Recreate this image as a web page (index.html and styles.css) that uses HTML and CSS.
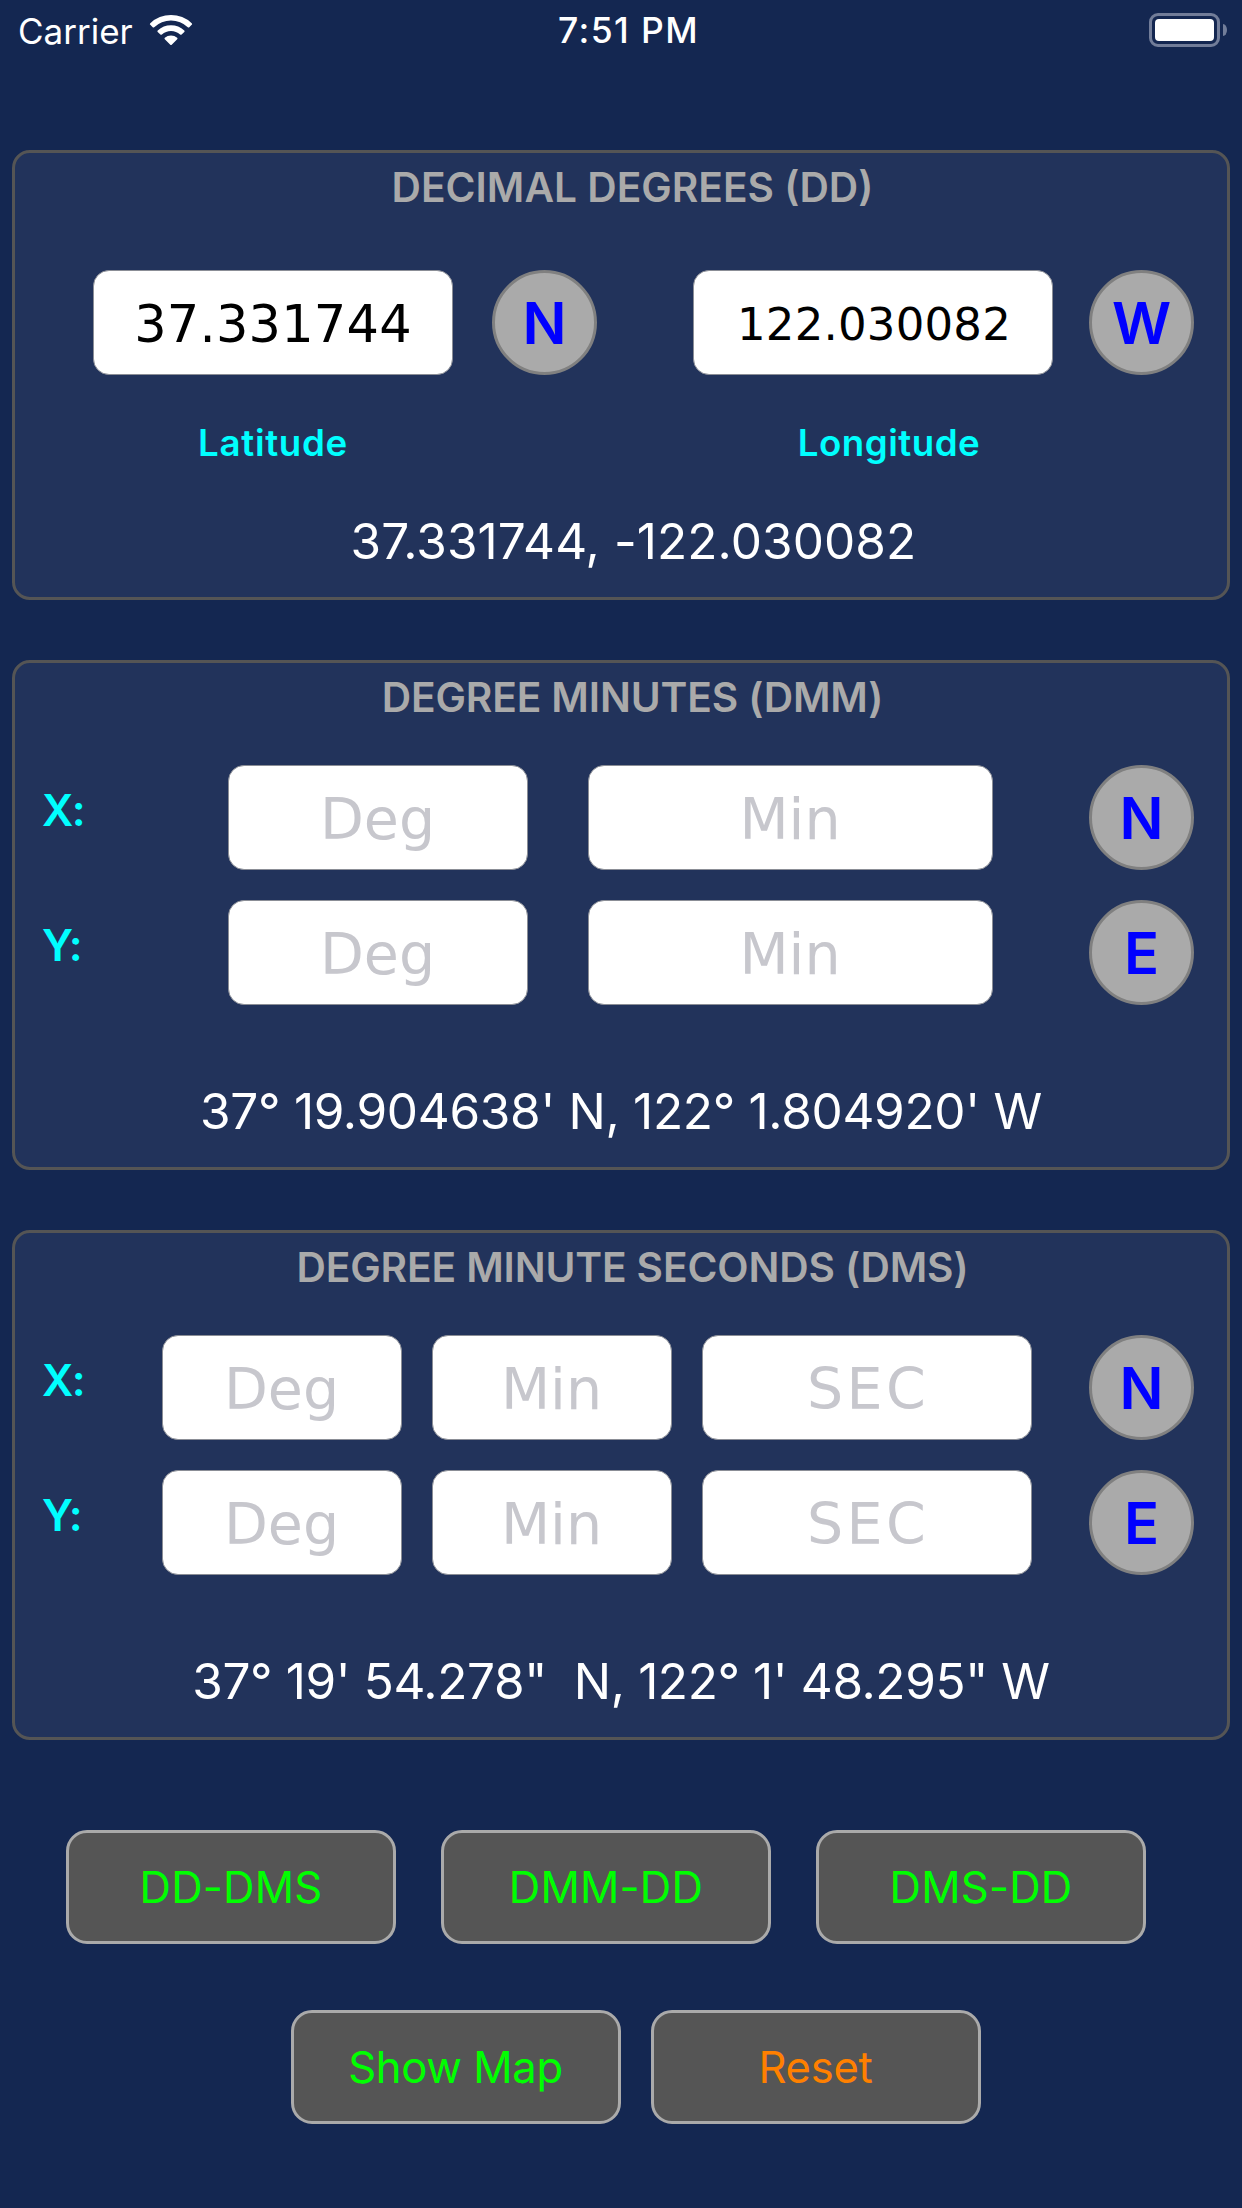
FILE: index.html
```html
<!DOCTYPE html>
<html lang="en">
<head>
<meta charset="utf-8">
<title>Coordinate Converter</title>
<link rel="stylesheet" href="styles.css">
</head>
<body>
<header class="status">
  <div class="status-left">
    <span class="carrier">Carrier</span>
    <svg class="wifi" width="44" height="32" viewBox="0 0 44 32" fill="#fff">
      <path d="M1.3 9.2a30 30 0 0 1 41.4 0q.9.8 0 1.6l-2.4 2.4q-.7.6-1.5 0a24.500 24.500 0 0 0-33.600 0q-.8.6-1.500 0L1.300 10.800q-.9-.8 0-1.600z"/>
      <path d="M8.700 16.500a19.500 19.500 0 0 1 26.600 0q.7.700 0 1.400l-2.700 2.600q-.7.600-1.500 0a13.500 13.500 0 0 0-18.200 0q-.8.600-1.500 0l-2.700-2.600q-.7-.700 0-1.400z"/>
      <path d="M15.800 23.800a9.500 9.500 0 0 1 12.400 0q.7.700 0 1.400l-5.500 5.500q-.7.600-1.400 0l-5.500-5.500q-.7-.700 0-1.400z"/>
    </svg>
  </div>
  <span class="time">7:51 PM</span>
  <div class="status-right">
    <div class="battery"><div class="battery-level"></div></div>
    <div class="battery-cap"></div>
  </div>
</header>

<main class="panels">
  <section class="panel panel-dd">
    <h2 class="title title-dd">DECIMAL DEGREES (DD)</h2>
    <div class="dd-row">
      <div class="field value-lat">37.331744</div>
      <div class="dir dir-lat">N</div>
      <div class="field field-lon value-lon">122.030082</div>
      <div class="dir dir-lon">W</div>
    </div>
    <div class="captions">
      <span class="caption">Latitude</span>
      <span class="caption caption-lon">Longitude</span>
    </div>
    <p class="result result-dd">37.331744, -122.030082</p>
  </section>

  <section class="panel panel-dm">
    <h2 class="title">DEGREE MINUTES (DMM)</h2>
    <div class="rows">
      <div class="row row-dmm">
        <span class="axis">X:</span>
        <div class="field">Deg</div>
        <div class="field">Min</div>
        <div class="dir">N</div>
      </div>
      <div class="row row-dmm">
        <span class="axis">Y:</span>
        <div class="field">Deg</div>
        <div class="field">Min</div>
        <div class="dir">E</div>
      </div>
    </div>
    <p class="result result-dmm">37° 19.904638' N, 122° 1.804920' W</p>
  </section>

  <section class="panel panel-dm">
    <h2 class="title">DEGREE MINUTE SECONDS (DMS)</h2>
    <div class="rows">
      <div class="row row-dms">
        <span class="axis">X:</span>
        <div class="field">Deg</div>
        <div class="field">Min</div>
        <div class="field field-sec">SEC</div>
        <div class="dir">N</div>
      </div>
      <div class="row row-dms">
        <span class="axis">Y:</span>
        <div class="field">Deg</div>
        <div class="field">Min</div>
        <div class="field field-sec">SEC</div>
        <div class="dir">E</div>
      </div>
    </div>
    <p class="result result-dms">37° 19' 54.278"  N, 122° 1' 48.295" W</p>
  </section>
</main>

<nav class="actions">
  <div class="buttons buttons-convert">
    <button class="btn">DD-DMS</button>
    <button class="btn">DMM-DD</button>
    <button class="btn">DMS-DD</button>
  </div>
  <div class="buttons buttons-tools">
    <button class="btn btn-map">Show Map</button>
    <button class="btn btn-reset">Reset</button>
  </div>
</nav>
</body>
</html>
```
FILE: styles.css
```css
* { box-sizing: border-box; margin: 0; padding: 0; }

body {
  width: 1242px;
  height: 2208px;
  background: #142751;
  font-family: Inter, "Liberation Sans", sans-serif;
  color: #fff;
  overflow: hidden;
}

/* Status bar */
.status {
  display: grid;
  grid-template-columns: 1fr auto 1fr;
  align-items: center;
  height: 62px;
  padding: 0 15px 0 18px;
  font-size: 35px;
  line-height: 62px;
}
.status-left { display: flex; align-items: center; gap: 16px; }
.wifi { display: block; margin-bottom: 2px; }
.time { font-size: 35.5px; font-weight: 500; letter-spacing: 1.4px; padding-left: 12px; }
.status-right { display: flex; align-items: center; justify-content: flex-end; gap: 3px; margin-bottom: 2px; }
.battery {
  width: 71px;
  height: 34px;
  padding: 3px;
  border: 3px solid #727d99;
  border-radius: 9px;
}
.battery-level { height: 22px; border-radius: 4px; background: #fff; }
.battery-cap { width: 4px; height: 12px; border-radius: 0 4px 4px 0 / 0 6px 6px 0; background: #727d99; }

/* Panels */
.panels { display: flex; flex-direction: column; gap: 60px; padding: 88px 12px 0; }
.panel {
  background: #22335b;
  border: 3px solid #555;
  border-radius: 18px;
}
.panel-dd { height: 450px; }
.panel-dm { height: 510px; }

.title {
  height: 68px;
  line-height: 70px;
  padding-left: 23px;
  font-size: 40.7px;
  font-weight: 600;
  letter-spacing: -0.13px;
  text-align: center;
  color: #aaa;
}
.title-dd { letter-spacing: 0; }

.field {
  display: flex;
  align-items: center;
  justify-content: center;
  height: 105px;
  padding: 3px 1px 0 0;
  border: 1px solid #8b8e96;
  border-radius: 16px;
  background: #fff;
  color: #c7c7cd;
  font: 57px/1 "DejaVu Sans", sans-serif;
}
.dir {
  display: flex;
  align-items: center;
  justify-content: center;
  width: 105px;
  height: 105px;
  border: 3px solid #808080;
  border-radius: 50%;
  background: #aaa;
  color: #00f;
  font-size: 58px;
  font-weight: 600;
}

.dd-row { display: flex; margin-top: 49px; padding-left: 78px; }
.dd-row .field { width: 360px; padding-right: 0; color: #000; }
.dd-row .value-lat { font-size: 51px; letter-spacing: 0.2px; }
.dd-row .value-lon { padding-left: 2px; font-size: 45px; letter-spacing: 0.2px; }
.dir-lat { margin-left: 39px; }
.field-lon { margin-left: 96px; }
.dir-lon { margin-left: 36px; }

.captions { display: flex; margin-top: 38px; padding-left: 78px; }
.caption {
  width: 360px;
  height: 60px;
  line-height: 59px;
  font-size: 36.7px;
  font-weight: 600;
  letter-spacing: 0.7px;
  text-align: center;
  color: #0ff;
}
.caption-lon { margin-left: 256px; letter-spacing: 0.5px; }

.result {
  line-height: 60px;
  font-size: 49.5px;
  text-align: center;
  white-space: pre;
}
.result-dd { margin-top: 38px; padding-left: 25px; letter-spacing: 0.1px; }
.result-dmm { margin-top: 76px; letter-spacing: -0.31px; }
.result-dms { margin-top: 76px; letter-spacing: -0.4px; }

.rows { display: flex; flex-direction: column; gap: 30px; margin-top: 34px; padding: 0 33px 0 27px; }
.row { display: grid; align-items: center; }
.row .dir { justify-self: end; }
.row-dmm { grid-template-columns: 126px 300px 405px 1fr; column-gap: 60px; }
.row-dms { grid-template-columns: 90px 240px 240px 330px 1fr; column-gap: 30px; }
.axis {
  padding-bottom: 14px;
  font-size: 43.6px;
  font-weight: 600;
  letter-spacing: -1.6px;
  color: #0ff;
}
.field-sec { letter-spacing: 3.4px; padding-left: 3px; }

/* Action buttons */
.actions { display: flex; flex-direction: column; gap: 66px; margin-top: 90px; }
.buttons { display: flex; }
.buttons-convert { gap: 45px; padding-left: 66px; }
.buttons-tools { gap: 30px; padding-left: 291px; }
.btn {
  width: 330px;
  height: 114px;
  padding-top: 2px;
  border: 3px solid #aaa;
  border-radius: 21px;
  background: #555;
  color: #0f0;
  font: 43.6px/1.2 Inter, "Liberation Sans", sans-serif;
  letter-spacing: 0.2px;
}
.btn-map { padding-right: 1px; letter-spacing: -0.4px; }
.btn-reset { padding-right: 1px; color: #ff8000; letter-spacing: -0.3px; }
```
